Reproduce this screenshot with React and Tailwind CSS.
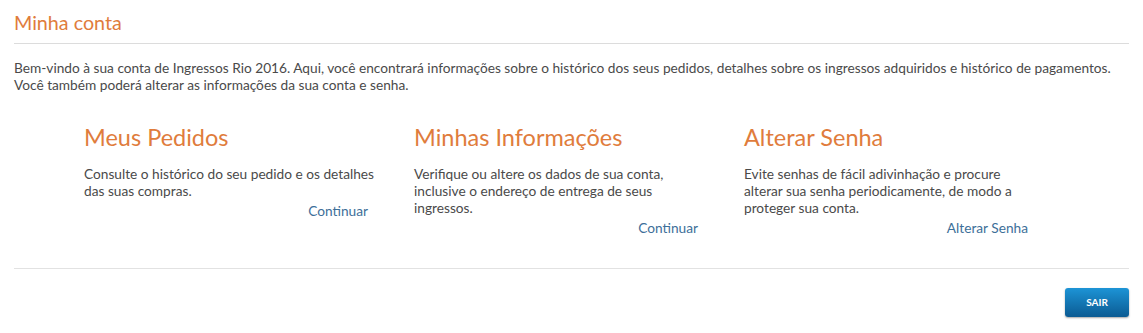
export default function App() {
  const cards = [
    {
      title: "Meus Pedidos",
      text: "Consulte o histórico do seu pedido e os detalhes das suas compras.",
      link: "Continuar",
    },
    {
      title: "Minhas Informações",
      text: "Verifique ou altere os dados de sua conta, inclusive o endereço de entrega de seus ingressos.",
      link: "Continuar",
    },
    {
      title: "Alterar Senha",
      text: "Evite senhas de fácil adivinhação e procure alterar sua senha periodicamente, de modo a proteger sua conta.",
      link: "Alterar Senha",
    },
  ];

  return (
    <div className="bg-white min-h-[333px] px-[14px] pt-[11px] font-['Lato',sans-serif] text-[#4a4a4a]">
      <h1 className="text-[19.7px] leading-[24px] text-[#e07c3c]">Minha conta</h1>
      <div className="mt-[8px] h-px bg-[#dcdcdc]" />
      <p className="mt-[15px] text-[13.7px] leading-[17px]">
        Bem-vindo à sua conta de Ingressos Rio 2016. Aqui, você encontrará informações sobre o histórico dos seus pedidos, detalhes sobre os ingressos adquiridos e histórico de pagamentos.
        <br />
        Você também poderá alterar as informações da sua conta e senha.
      </p>

      <div className="mt-[30px] flex pl-[70px]">
        {cards.map((c) => (
          <div key={c.title} className="w-[330px]">
            <div className="w-[290px]">
              <h2 className="text-[23.5px] leading-[28px] text-[#e07c3c]">{c.title}</h2>
              <p className="mt-[14px] text-[13.7px] leading-[17px]">{c.text}</p>
              <div className="text-right pr-[6px] leading-[21px]">
                <a href="#" className="text-[13.7px] text-[#3d6f99]">
                  {c.link}
                </a>
              </div>
            </div>
          </div>
        ))}
      </div>

      <div className="mt-[30px] h-px bg-[#e2e2e2]" />
      <div className="mt-[19px] flex justify-end">
        <button className="h-[29px] w-[64px] rounded-[3px] bg-gradient-to-b from-[#1d94d6] to-[#0b5b93] text-[10px] font-bold text-white shadow-[0_1px_2px_rgba(0,0,0,0.35)]">
          SAIR
        </button>
      </div>
    </div>
  );
}
